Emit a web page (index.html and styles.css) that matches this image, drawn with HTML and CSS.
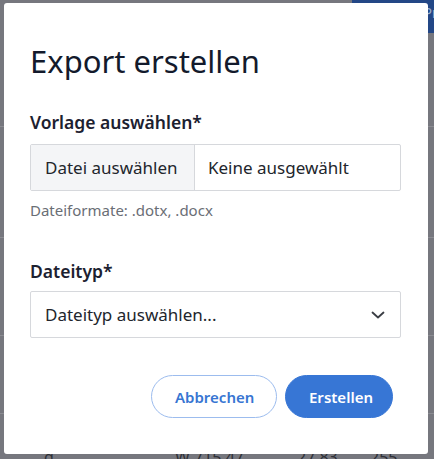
FILE: index.html
```html
<!DOCTYPE html>
<html lang="de">
<head>
<meta charset="utf-8">
<title>Export erstellen</title>
<link rel="stylesheet" href="styles.css">
</head>
<body>
<div class="page">
  <div class="topbar"><div class="topbar-blue"><span class="topbar-text">Profil</span></div></div>
  <div class="row row-a"></div>
  <div class="row row-b"></div>
  <div class="row row-c"></div>
  <div class="row row-d"></div>
  <div class="row row-e">
    <span class="cell c1">g</span>
    <span class="cell c2">W 715 47</span>
    <span class="cell c3">27 83</span>
    <span class="cell c4">255</span>
  </div>
</div>

<div class="modal" role="dialog" aria-labelledby="modal-title">
  <h1 class="modal-title" id="modal-title">Export erstellen</h1>

  <div class="field field-file">
    <label class="field-label">Vorlage auswählen*</label>
    <div class="file-input">
      <span class="file-button">Datei auswählen</span>
      <span class="file-name">Keine ausgewählt</span>
    </div>
    <div class="field-help">Dateiformate: .dotx, .docx</div>
  </div>

  <div class="field field-type">
    <label class="field-label">Dateityp*</label>
    <div class="select">
      <span class="select-text">Dateityp auswählen...</span>
      <svg class="chevron" width="14" height="8" viewBox="0 0 14 8" aria-hidden="true">
        <path d="M1.5 1.5 L7 6.5 L12.5 1.5" fill="none" stroke="#3a3d44" stroke-width="1.8" stroke-linecap="round" stroke-linejoin="round"/>
      </svg>
    </div>
  </div>

  <div class="modal-footer">
    <button class="btn btn-outline">Abbrechen</button>
    <button class="btn btn-primary">Erstellen</button>
  </div>
</div>
</body>
</html>
```

FILE: styles.css
```css
* { box-sizing: border-box; }

html, body {
  margin: 0;
  padding: 0;
  height: 100%;
}

body {
  background: #76777e;
  font-family: "Noto Sans", "Open Sans", sans-serif;
  overflow: hidden;
}

.page {
  display: flex;
  flex-direction: column;
}

.topbar {
  height: 33px;
  display: flex;
  justify-content: flex-end;
}

.topbar-blue {
  width: 82px;
  background: #234786;
  display: flex;
  justify-content: flex-end;
  overflow: hidden;
}

.topbar-text {
  color: #9fb0cc;
  font-size: 14px;
  line-height: 20px;
  margin-top: 3px;
  margin-right: -24px;
}

.row {
  border-bottom: 1px solid #8b8c92;
}

.row-a { height: 94px; }
.row-b { height: 111px; }
.row-c { height: 98px; }
.row-d { height: 78px; }
.row-e {
  border-bottom: none;
  position: relative;
  height: 60px;
  display: flex;
  color: #2e3037;
  font-size: 16px;
  line-height: 20px;
  padding-top: 33px;
}

.cell { display: block; }
.c1 { margin-left: 44px; width: 131px; }
.c2 { width: 122px; }
.c3 { width: 73px; }

.modal {
  position: absolute;
  top: 3px;
  left: 4px;
  width: 424px;
  height: 451px;
  background: #ffffff;
  border-radius: 3px;
  padding: 38px 27px 0 26px;
  display: flex;
  flex-direction: column;
  color: #1f2330;
}

.modal-title {
  margin: 0;
  font-size: 31px;
  font-weight: 400;
  line-height: 40px;
  color: #131a2c;
}

.field {
  display: flex;
  flex-direction: column;
}

.field-file { margin-top: 29px; }
.field-type { margin-top: 39px; }

.field-label {
  font-size: 17.5px;
  font-weight: 600;
  line-height: 24px;
  color: #1c2130;
}

.field-file .field-label { margin-bottom: 10px; }
.field-type .field-label { margin-bottom: 8px; }

.file-input {
  display: flex;
  height: 47px;
  border: 1px solid #d6d8dc;
  border-radius: 2px;
  font-size: 17px;
  color: #22252c;
}

.file-button {
  width: 164px;
  background: #f4f5f7;
  border-right: 1px solid #d6d8dc;
  display: flex;
  align-items: center;
  padding-left: 14px;
}

.file-name {
  display: flex;
  align-items: center;
  padding-left: 13px;
}

.field-help {
  margin-top: 9px;
  font-size: 15px;
  line-height: 20px;
  color: #6a6e75;
}

.select {
  height: 47px;
  border: 1px solid #d6d8dc;
  border-radius: 2px;
  display: flex;
  align-items: center;
  justify-content: space-between;
  padding: 0 15px 0 14px;
  font-size: 17px;
  color: #22252c;
}

.chevron { display: block; margin-top: 1px; }

.modal-footer {
  margin-top: 37px;
  margin-right: 8px;
  display: flex;
  justify-content: flex-end;
  gap: 8px;
}

.btn {
  height: 43px;
  border-radius: 22px;
  font-family: "Noto Sans", "Open Sans", sans-serif;
  font-size: 15px;
  font-weight: 600;
  padding: 0 23px;
  cursor: pointer;
}

.btn-outline {
  background: #ffffff;
  border: 1px solid #9cbcee;
  color: #3775d2;
  width: 126px;
}

.btn-primary {
  background: #3776d5;
  border: 1px solid #3776d5;
  color: #ffffff;
  width: 108px;
}
```
